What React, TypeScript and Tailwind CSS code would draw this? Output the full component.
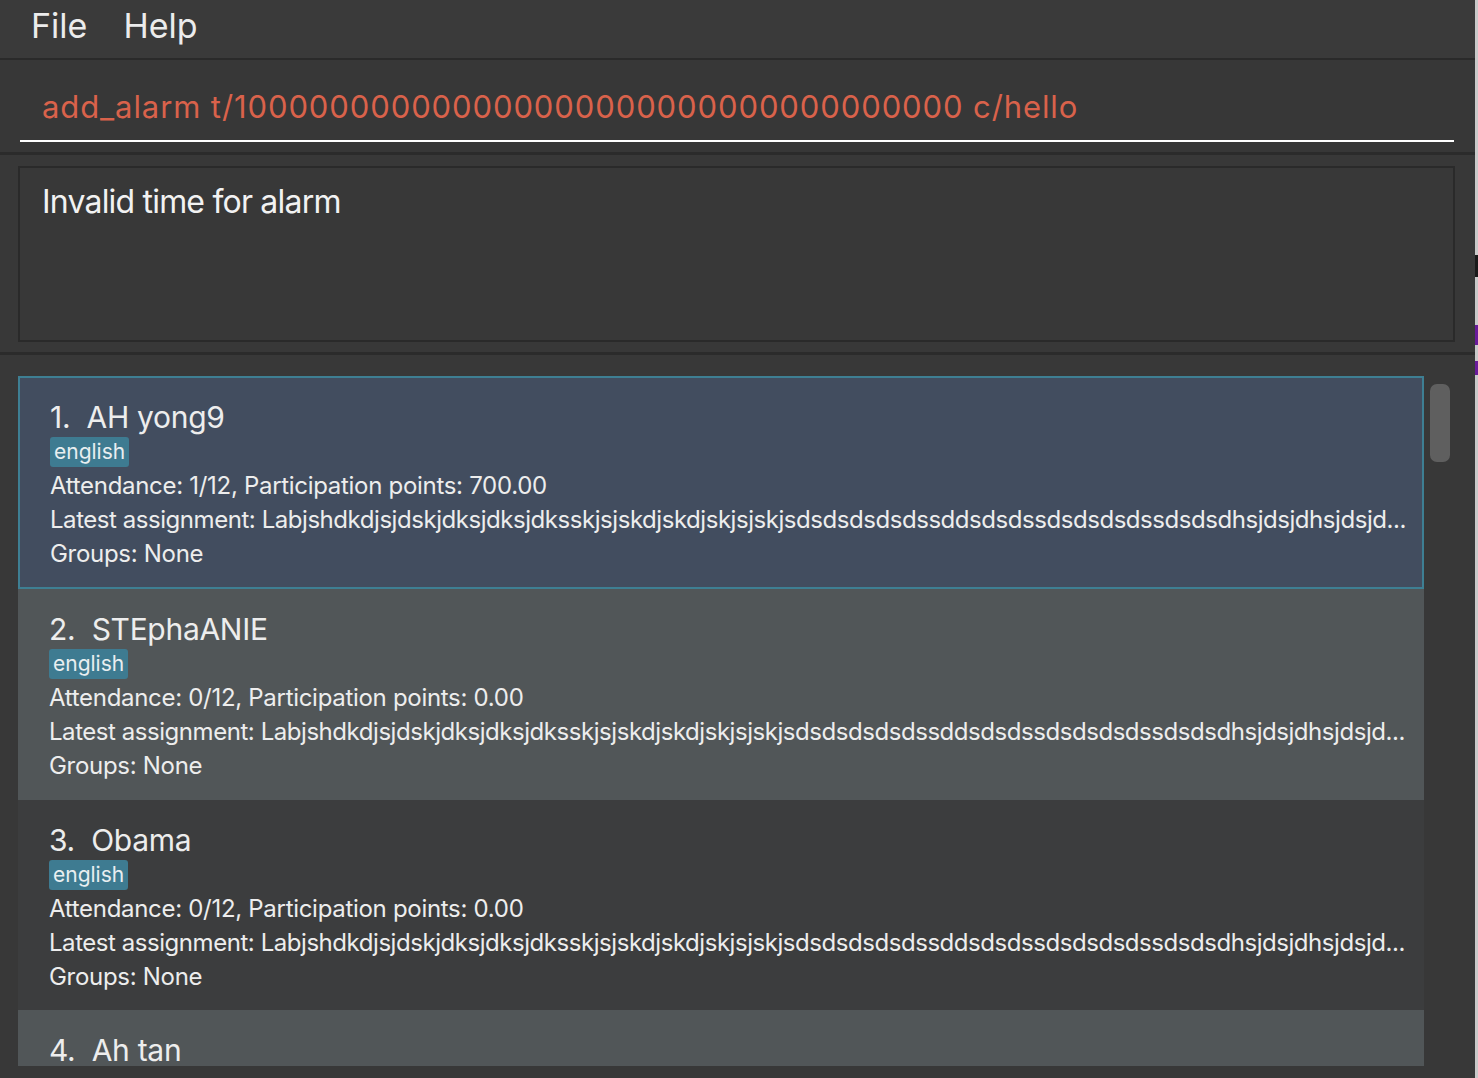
import React from "react";

const students = [
  { id: 1, name: "AH yong9", attendance: "1/12", points: "700.00", selected: true },
  { id: 2, name: "STEphaANIE", attendance: "0/12", points: "0.00" },
  { id: 3, name: "Obama", attendance: "0/12", points: "0.00" },
  { id: 4, name: "Ah tan", attendance: "0/12", points: "0.00" },
];

// shown already cut, as the list cell does
const assignment =
  "Labjshdkdjsjdskjdksjdksjdksskjsjskdjskdjskjsjskjsdsdsdsdsdssddsdsdssdsdsdsdssdsdsdhsjdsjdhsjdsjd...";

const StudentCard = ({ s, index }: { s: any; index: number }) => {
  const bg = s.selected
    ? "bg-[#424d5f] border-2 border-[#3e7f93] pl-[30px] pt-[20px] h-[213px]"
    : index % 2 === 1
    ? "bg-[#515658] pl-[31px] pt-[21px] h-[211px]"
    : "bg-[#3c3d3e] pl-[31px] pt-[21px] h-[210px]";

  return (
    <div className={`${bg} shrink-0 pr-2 text-[#ededed]`}>
      <h3 className="text-[30px] leading-[38px] tracking-[-0.3px]">
        {s.id}.&nbsp; {s.name}
      </h3>
      <div className="flex mt-[1px]">
        <span className="bg-[#3e7b91] rounded-[3px] px-[4px] text-[21px] leading-[30px] text-[#e8eef0]">
          english
        </span>
      </div>
      <div className="text-[24px] leading-[34px] tracking-[-0.3px] mt-[2px] whitespace-nowrap">
        <p>
          Attendance: {s.attendance}, Participation points: {s.points}
        </p>
        <p className="tracking-[-0.45px]">Latest assignment: {assignment}</p>
        <p>Groups: None</p>
      </div>
    </div>
  );
};

export default function App() {
  return (
    <div
      className="w-[1478px] h-[1078px] flex bg-[#383838] overflow-hidden"
      style={{ fontFamily: "Inter, 'Noto Sans', sans-serif" }}
    >
      <div className="w-[1475px] h-full flex flex-col">
        {/* MENU BAR */}
        <div className="h-[58px] bg-[#3a3a3a] flex items-center gap-[36px] pl-[31px] pb-[7px] text-[34px] text-[#ececec] shrink-0">
          <span>File</span>
          <span>Help</span>
        </div>
        <div className="h-[2px] bg-[#2a2a2a] shrink-0" />

        {/* COMMAND BOX */}
        <div className="h-[92px] bg-[#373737] pl-[20px] pr-[21px] flex flex-col justify-end shrink-0">
          <div className="border-b-[2px] border-white pb-[14px] pl-[22px] text-[31px] leading-[38px] tracking-[0.9px] text-[#d9624b] whitespace-nowrap">
            add_alarm t/100000000000000000000000000000000000 c/hello
          </div>
          <div className="h-[10px]" />
        </div>
        <div className="h-[3px] bg-[#2b2b2b] shrink-0" />

        {/* RESULT DISPLAY */}
        <div className="h-[197px] bg-[#383838] pl-[18px] pr-[20px] pt-[11px] shrink-0">
          <div className="h-[176px] border-2 border-[#2a2a2a] bg-[#383838] pl-[22px] pt-[16px] text-[32px] leading-[36px] tracking-[-0.8px] text-[#f2f2f2]">
            Invalid time for alarm
          </div>
        </div>
        <div className="h-[3px] bg-[#2b2b2b] shrink-0" />

        {/* STUDENT LIST */}
        <div className="flex-1 flex pl-[18px] pt-[21px] min-h-0">
          <div className="w-[1406px] flex flex-col overflow-hidden">
            {students.map((s, i) => (
              <StudentCard key={s.id} s={s} index={i} />
            ))}
          </div>
          <div className="w-[51px] pl-[6px] pt-[8px] pr-[25px]">
            <div className="w-[20px] h-[78px] rounded-[7px] bg-[#5f5f5f]" />
          </div>
        </div>
        <div className="h-[12px] bg-[#383838] shrink-0" />
      </div>

      {/* WINDOW EDGE */}
      <div className="w-[3px] h-full flex flex-col bg-[#c9c9c9]">
        <div className="h-[255px]" />
        <div className="h-[22px] bg-[#1a1a1a]" />
        <div className="h-[48px]" />
        <div className="h-[20px] bg-[#6a1b9a]" />
        <div className="h-[16px]" />
        <div className="h-[14px] bg-[#6a1b9a]" />
      </div>
    </div>
  );
}
